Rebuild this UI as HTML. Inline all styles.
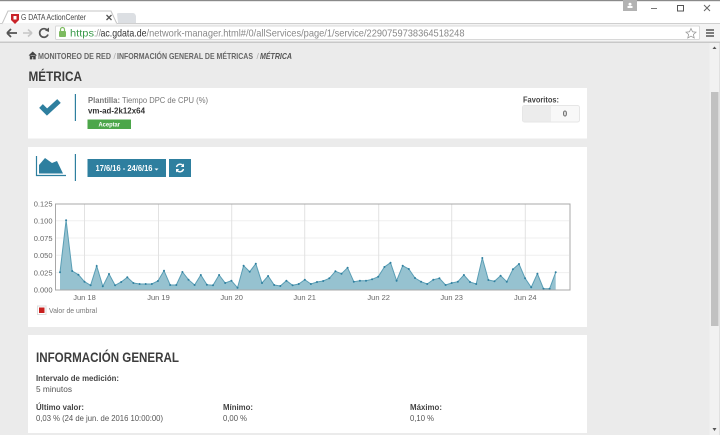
<!DOCTYPE html>
<html><head><meta charset="utf-8"><title>G DATA ActionCenter</title>
<style>
html,body{margin:0;padding:0;width:720px;height:435px;overflow:hidden;background:#ebebeb}
svg{display:block;filter:blur(.35px);font-family:"Liberation Sans",sans-serif}
.b{font-weight:bold}
.y{font-size:7.5px;text-anchor:end;fill:#666}
.x{font-size:7.5px;text-anchor:middle;fill:#666}
</style></head><body>
<svg width="720" height="435" viewBox="0 0 720 435" xmlns="http://www.w3.org/2000/svg">
<rect width="720" height="435" fill="#ebebeb"/>
<!-- chrome -->
<rect width="720" height="24" fill="#fff"/>
<rect width="720" height="1.2" fill="#8a8a8a"/>
<rect y="24" width="720" height="18" fill="#f3f3f3"/>
<rect y="23" width="720" height="1" fill="#cfcfcf"/>
<rect y="41.5" width="720" height="1.5" fill="#c8c8c8"/>
<path d="M2 24 L8 11 H111 L117 24" fill="#fff" stroke="#c4c4c4"/>
<rect x="2.5" y="23" width="114" height="2" fill="#f3f3f3"/>
<path d="M118 23 L117 14 Q117 13 119 13 H133 Q135 13 136 16 L136 23Z" fill="#dcdfe3"/>
<path d="M11 14 H19 V20 L15 24 L11 20Z" fill="#c9242a"/>
<rect x="13.5" y="16" width="3" height="3.5" fill="#fff"/>
<text x="21" y="20" font-size="8.5" textLength="65" lengthAdjust="spacingAndGlyphs" fill="#444">G DATA ActionCenter</text>
<path d="M106.5 15 L111.5 20 M111.5 15 L106.5 20" stroke="#555" stroke-width="1.3"/>
<path d="M7 33 H17 M7 33 L11 29 M7 33 L11 37" stroke="#555" stroke-width="1.8" fill="none"/>
<path d="M23 33 H32 M32 33 L28 29.5 M32 33 L28 36.5" stroke="#c6c6c6" stroke-width="1.6" fill="none"/>
<path d="M47.5 30.5 A4.3 4.3 0 1 0 48 34.5" stroke="#555" stroke-width="1.7" fill="none"/>
<path d="M45 30.5 L49 27.5 V32Z" fill="#555"/>
<rect x="55.5" y="26" width="644" height="13.5" rx="1" fill="#fff" stroke="#d8d8d8"/>
<rect x="59" y="31" width="7" height="6" rx="1" fill="#7dbb60"/>
<path d="M60.5 31 V29.5 A2 2 0 0 1 64.5 29.5 V31" stroke="#7dbb60" fill="none" stroke-width="1.2"/>
<text x="70" y="36.5" font-size="10.5" textLength="24" lengthAdjust="spacingAndGlyphs" fill="#3a9a4a">https</text>
<text x="94" y="36.5" font-size="10.5" textLength="7" lengthAdjust="spacingAndGlyphs" fill="#888">://</text>
<text x="100.5" y="36.5" font-size="10.5" textLength="46" lengthAdjust="spacingAndGlyphs" fill="#333">ac.gdata.de</text>
<text x="146.5" y="36.5" font-size="10.5" textLength="318" lengthAdjust="spacingAndGlyphs" fill="#888">/network-manager.html#/0/allServices/page/1/service/2290759738364518248</text>
<path d="M691 28.5 L692.5 31.8 L696 32.2 L693.4 34.5 L694.2 38 L691 36.2 L687.8 38 L688.6 34.5 L686 32.2 L689.5 31.8Z" fill="#fff" stroke="#9a9a9a" stroke-width=".8"/>
<path d="M706 30 H714 M706 33 H714 M706 36 H714" stroke="#555" stroke-width="1.6"/>
<rect x="623" y="0" width="14" height="11" fill="#b2b2b2"/>
<circle cx="630" cy="4.3" r="1.5" fill="#fff"/><rect x="627.5" y="6" width="5" height="2" fill="#fff"/>
<rect x="651" y="8" width="6" height="1" fill="#777"/>
<rect x="677.5" y="5.5" width="6" height="5.5" fill="none" stroke="#555" stroke-width="1"/>
<path d="M704 5 L710 11 M710 5 L704 11" stroke="#666" stroke-width="1"/>
<!-- scrollbar -->
<rect x="709.5" y="43" width="10.5" height="392" fill="#f1f1f1"/>
<rect x="719" y="43" width="1" height="392" fill="#e0e0e0"/>
<path d="M712.5 49 L714.5 46.5 L716.5 49Z" fill="#555"/>
<rect x="711" y="92" width="7.5" height="234" fill="#c1c1c1"/>
<path d="M712.5 428 H716.5 L714.5 431Z" fill="#555"/>
<!-- breadcrumb -->
<path d="M29 55.5 L32.7 52 L36.5 55.5 M30.2 55 V59 H31.9 V56.6 H33.6 V59 H35.3 V55" fill="#444" stroke="#444" stroke-width=".8"/>
<text x="38" y="59" font-size="8.5" class="b" textLength="73" lengthAdjust="spacingAndGlyphs" fill="#666">MONITOREO DE RED</text>
<text x="113.5" y="59" font-size="8.5" fill="#aaa">/</text>
<text x="117" y="59" font-size="8.5" class="b" textLength="136" lengthAdjust="spacingAndGlyphs" fill="#666">INFORMACIÓN GENERAL DE MÉTRICAS</text>
<text x="256.5" y="59" font-size="8.5" fill="#aaa">/</text>
<text x="260" y="59" font-size="8.5" font-weight="bold" font-style="italic" textLength="32" lengthAdjust="spacingAndGlyphs" fill="#555">MÉTRICA</text>
<text x="28.5" y="81" font-size="13.5" class="b" textLength="53.5" lengthAdjust="spacingAndGlyphs" fill="#3d3d3d">MÉTRICA</text>
<!-- card 1 -->
<rect x="28" y="88" width="559" height="50.5" fill="#fff"/>
<path d="M41 106 L47 112 L59 101" fill="none" stroke="#2e7f9f" stroke-width="5.2"/>
<rect x="74.8" y="94" width="1.2" height="27" fill="#2e7f9f"/>
<text x="88" y="103" font-size="8" class="b" textLength="32" lengthAdjust="spacingAndGlyphs" fill="#777">Plantilla:</text>
<text x="122" y="103" font-size="8" textLength="86" lengthAdjust="spacingAndGlyphs" fill="#777">Tiempo DPC de CPU (%)</text>
<text x="88" y="113.5" font-size="8.5" class="b" textLength="57" lengthAdjust="spacingAndGlyphs" fill="#333">vm-ad-2k12x64</text>
<rect x="87.5" y="119.5" width="43.5" height="9.5" fill="#4ca64a"/>
<text x="98.5" y="126.5" font-size="6.5" class="b" textLength="21.5" lengthAdjust="spacingAndGlyphs" fill="#fff">Aceptar</text>
<text x="523" y="102.5" font-size="8.5" class="b" textLength="36" lengthAdjust="spacingAndGlyphs" fill="#444">Favoritos:</text>
<rect x="522.5" y="105.5" width="57" height="16.5" rx="2" fill="#f8f8f8" stroke="#e6e6e6"/>
<rect x="523" y="106" width="28" height="15.5" fill="#ececec"/>
<text x="565" y="116.5" font-size="8" class="b" text-anchor="middle" fill="#666">0</text>
<!-- card 2 -->
<rect x="28" y="147" width="559" height="180" fill="#fff"/>
<path d="M36.5 156 V175.5 H66" fill="none" stroke="#2e7f9f" stroke-width="1.2"/>
<path d="M39 173.5 V165 L45 158 L52 163 L57 161 L63 173.5Z" fill="#2e7f9f"/>
<rect x="74.8" y="154" width="1.2" height="27" fill="#2e7f9f"/>
<rect x="87.5" y="159" width="78.5" height="18" fill="#2e7f9f"/>
<text x="95.5" y="171" font-size="8" class="b" textLength="57" lengthAdjust="spacingAndGlyphs" fill="#fff">17/6/16 - 24/6/16</text>
<path d="M154.5 168.5 H158.5 L156.5 170.5Z" fill="#fff"/>
<rect x="169" y="159" width="22" height="18" fill="#2e7f9f"/>
<path d="M176.5 167 A3.8 3.8 0 0 1 183 165.5 M183.5 169 A3.8 3.8 0 0 1 177 170.5" fill="none" stroke="#fff" stroke-width="1.4"/>
<path d="M184 163.5 V167 H180.8Z M176 172.5 V169 H179.2Z" fill="#fff"/>
<!-- chart grid -->
<g stroke="#efefef" stroke-width="1">
<path d="M56 220.7 H569 M56 238 H569 M56 255.3 H569 M56 272.6 H569"/>
</g>
<g stroke="#e2e2e2" stroke-width="1">
<path d="M84.5 204 V289 M158.5 204 V289 M231.7 204 V289 M304.7 204 V289 M378.7 204 V289 M451.7 204 V289 M525.3 204 V289"/>
</g>
<polygon fill="#96c2d0" points="60,290 60,272.3 66.1,220.3 72.2,271 78.4,274.7 84.5,281.7 90.6,285.3 96.7,266 102.8,286.3 109,274 115.1,285.3 121.2,282 127.3,277.3 133.4,283 139.6,284 145.7,284 151.8,284 157.9,281 164,270.7 170.2,285 176.3,285 182.4,272 188.5,279.7 194.6,285 200.8,275 206.9,284.7 213,285.3 219.1,275 225.2,283 231.4,280.7 237.5,287.7 243.6,265.7 249.7,271.7 255.8,263.7 262,283 268.1,276 274.2,285 280.3,286 286.4,280.7 292.6,285.3 298.7,284 304.8,279.7 310.9,284 317,282 323.2,281 329.3,278.3 335.4,271.3 341.5,273.7 347.6,267.7 353.8,281.7 359.9,280.7 366,280.7 372.1,279.3 378.2,276.7 384.4,267 390.5,262.7 396.6,280.7 402.7,265.7 408.8,269 415,278 421.1,281.7 427.2,284 433.3,279.7 439.4,278.3 445.6,285 451.7,283 457.8,281.7 463.9,275 470,282 476.2,284 482.3,258 488.4,280 494.5,281.3 500.6,275.7 506.8,281.7 512.9,269.3 519,264 525.1,278.3 531.2,287.3 537.4,273.7 543.5,288.7 549.6,288.7 555.7,272.3 555.7,290"/>
<polyline fill="none" stroke="#5a9eb5" stroke-width="1" points="60,272.3 66.1,220.3 72.2,271 78.4,274.7 84.5,281.7 90.6,285.3 96.7,266 102.8,286.3 109,274 115.1,285.3 121.2,282 127.3,277.3 133.4,283 139.6,284 145.7,284 151.8,284 157.9,281 164,270.7 170.2,285 176.3,285 182.4,272 188.5,279.7 194.6,285 200.8,275 206.9,284.7 213,285.3 219.1,275 225.2,283 231.4,280.7 237.5,287.7 243.6,265.7 249.7,271.7 255.8,263.7 262,283 268.1,276 274.2,285 280.3,286 286.4,280.7 292.6,285.3 298.7,284 304.8,279.7 310.9,284 317,282 323.2,281 329.3,278.3 335.4,271.3 341.5,273.7 347.6,267.7 353.8,281.7 359.9,280.7 366,280.7 372.1,279.3 378.2,276.7 384.4,267 390.5,262.7 396.6,280.7 402.7,265.7 408.8,269 415,278 421.1,281.7 427.2,284 433.3,279.7 439.4,278.3 445.6,285 451.7,283 457.8,281.7 463.9,275 470,282 476.2,284 482.3,258 488.4,280 494.5,281.3 500.6,275.7 506.8,281.7 512.9,269.3 519,264 525.1,278.3 531.2,287.3 537.4,273.7 543.5,288.7 549.6,288.7 555.7,272.3"/>
<g fill="#2e7f9f">
<circle cx="60" cy="272.3" r="1"/><circle cx="66.1" cy="220.3" r="1"/><circle cx="72.2" cy="271" r="1"/><circle cx="78.4" cy="274.7" r="1"/><circle cx="84.5" cy="281.7" r="1"/><circle cx="90.6" cy="285.3" r="1"/><circle cx="96.7" cy="266" r="1"/><circle cx="102.8" cy="286.3" r="1"/><circle cx="109" cy="274" r="1"/><circle cx="115.1" cy="285.3" r="1"/><circle cx="121.2" cy="282" r="1"/><circle cx="127.3" cy="277.3" r="1"/><circle cx="133.4" cy="283" r="1"/><circle cx="139.6" cy="284" r="1"/><circle cx="145.7" cy="284" r="1"/><circle cx="151.8" cy="284" r="1"/><circle cx="157.9" cy="281" r="1"/><circle cx="164" cy="270.7" r="1"/><circle cx="170.2" cy="285" r="1"/><circle cx="176.3" cy="285" r="1"/><circle cx="182.4" cy="272" r="1"/><circle cx="188.5" cy="279.7" r="1"/><circle cx="194.6" cy="285" r="1"/><circle cx="200.8" cy="275" r="1"/><circle cx="206.9" cy="284.7" r="1"/><circle cx="213" cy="285.3" r="1"/><circle cx="219.1" cy="275" r="1"/><circle cx="225.2" cy="283" r="1"/><circle cx="231.4" cy="280.7" r="1"/><circle cx="237.5" cy="287.7" r="1"/><circle cx="243.6" cy="265.7" r="1"/><circle cx="249.7" cy="271.7" r="1"/><circle cx="255.8" cy="263.7" r="1"/><circle cx="262" cy="283" r="1"/><circle cx="268.1" cy="276" r="1"/><circle cx="274.2" cy="285" r="1"/><circle cx="280.3" cy="286" r="1"/><circle cx="286.4" cy="280.7" r="1"/><circle cx="292.6" cy="285.3" r="1"/><circle cx="298.7" cy="284" r="1"/><circle cx="304.8" cy="279.7" r="1"/><circle cx="310.9" cy="284" r="1"/><circle cx="317" cy="282" r="1"/><circle cx="323.2" cy="281" r="1"/><circle cx="329.3" cy="278.3" r="1"/><circle cx="335.4" cy="271.3" r="1"/><circle cx="341.5" cy="273.7" r="1"/><circle cx="347.6" cy="267.7" r="1"/><circle cx="353.8" cy="281.7" r="1"/><circle cx="359.9" cy="280.7" r="1"/><circle cx="366" cy="280.7" r="1"/><circle cx="372.1" cy="279.3" r="1"/><circle cx="378.2" cy="276.7" r="1"/><circle cx="384.4" cy="267" r="1"/><circle cx="390.5" cy="262.7" r="1"/><circle cx="396.6" cy="280.7" r="1"/><circle cx="402.7" cy="265.7" r="1"/><circle cx="408.8" cy="269" r="1"/><circle cx="415" cy="278" r="1"/><circle cx="421.1" cy="281.7" r="1"/><circle cx="427.2" cy="284" r="1"/><circle cx="433.3" cy="279.7" r="1"/><circle cx="439.4" cy="278.3" r="1"/><circle cx="445.6" cy="285" r="1"/><circle cx="451.7" cy="283" r="1"/><circle cx="457.8" cy="281.7" r="1"/><circle cx="463.9" cy="275" r="1"/><circle cx="470" cy="282" r="1"/><circle cx="476.2" cy="284" r="1"/><circle cx="482.3" cy="258" r="1"/><circle cx="488.4" cy="280" r="1"/><circle cx="494.5" cy="281.3" r="1"/><circle cx="500.6" cy="275.7" r="1"/><circle cx="506.8" cy="281.7" r="1"/><circle cx="512.9" cy="269.3" r="1"/><circle cx="519" cy="264" r="1"/><circle cx="525.1" cy="278.3" r="1"/><circle cx="531.2" cy="287.3" r="1"/><circle cx="537.4" cy="273.7" r="1"/><circle cx="543.5" cy="288.7" r="1"/><circle cx="549.6" cy="288.7" r="1"/><circle cx="555.7" cy="272.3" r="1"/>
</g>
<rect x="55.5" y="204" width="514.5" height="86" fill="none" stroke="#a8a8a8" stroke-width="1"/>
<text class="y" x="52.5" y="206.5">0.125</text>
<text class="y" x="52.5" y="223.5">0.100</text>
<text class="y" x="52.5" y="240.8">0.075</text>
<text class="y" x="52.5" y="258">0.050</text>
<text class="y" x="52.5" y="275.3">0.025</text>
<text class="y" x="52.5" y="292.5">0.000</text>
<text class="x" x="84.5" y="300">Jun 18</text>
<text class="x" x="158.5" y="300">Jun 19</text>
<text class="x" x="231.7" y="300">Jun 20</text>
<text class="x" x="304.7" y="300">Jun 21</text>
<text class="x" x="378.7" y="300">Jun 22</text>
<text class="x" x="451.7" y="300">Jun 23</text>
<text class="x" x="525.3" y="300">Jun 24</text>
<rect x="37.5" y="306" width="8.5" height="8.5" fill="#fff" stroke="#ddd"/>
<rect x="39" y="307.5" width="5.5" height="5.5" fill="#c8201f"/>
<text x="49" y="313" font-size="7.5" textLength="48" lengthAdjust="spacingAndGlyphs" fill="#777">Valor de umbral</text>
<!-- card 3 -->
<rect x="28" y="335" width="559" height="98" fill="#fff"/>
<text x="36" y="362" font-size="13.5" class="b" textLength="143" lengthAdjust="spacingAndGlyphs" fill="#3d3d3d">INFORMACIÓN GENERAL</text>
<text x="36" y="381" font-size="8.5" class="b" textLength="83" lengthAdjust="spacingAndGlyphs" fill="#444">Intervalo de medición:</text>
<text x="36" y="392" font-size="8.5" textLength="36" lengthAdjust="spacingAndGlyphs" fill="#555">5 minutos</text>
<text x="36" y="410" font-size="8.5" class="b" textLength="48" lengthAdjust="spacingAndGlyphs" fill="#444">Último valor:</text>
<text x="36" y="421" font-size="8.5" textLength="127" lengthAdjust="spacingAndGlyphs" fill="#555">0,03 % (24 de jun. de 2016 10:00:00)</text>
<text x="223" y="410" font-size="8.5" class="b" textLength="30" lengthAdjust="spacingAndGlyphs" fill="#444">Mínimo:</text>
<text x="223" y="421" font-size="8.5" textLength="24" lengthAdjust="spacingAndGlyphs" fill="#555">0,00 %</text>
<text x="410" y="410" font-size="8.5" class="b" textLength="32" lengthAdjust="spacingAndGlyphs" fill="#444">Máximo:</text>
<text x="410" y="421" font-size="8.5" textLength="24" lengthAdjust="spacingAndGlyphs" fill="#555">0,10 %</text>
</svg>
</body></html>
